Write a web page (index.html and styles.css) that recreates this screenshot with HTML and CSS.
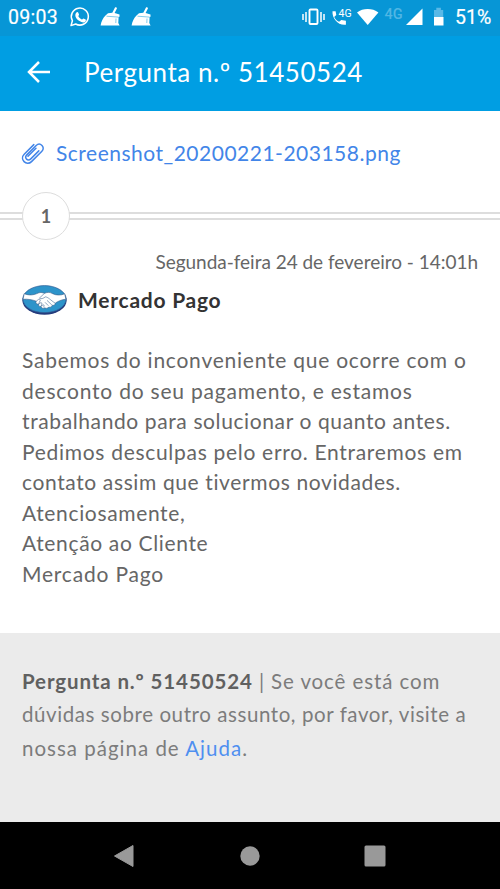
FILE: index.html
```html
<!DOCTYPE html>
<html lang="pt-BR">
<head>
<meta charset="utf-8">
<title>Pergunta n.º 51450524</title>
<link rel="stylesheet" href="styles.css">
</head>
<body>
<div class="status">
  <time class="clock">09:03</time>
  <svg class="notifications" width="92" height="36" viewBox="68 0 92 36">
    <path d="M71 25.600l1.400-4.900a8.500 8.500 0 1 1 3.300 3.300z" fill="none" stroke="#fff" stroke-width="1.500" stroke-linejoin="round"/>
    <path d="M76.500 12.400c.7-.6 1.400-.5 1.800.3l.7 1.700c.2.600-.8 1.400-.8 1.700.8 1.500 1.900 2.600 3.600 3.400.5.100 1.200-1.200 1.700-1.100l2.100 1.100c.6.300.3 1.400-.1 2-1.500 1.700-3.800 1-6-.4-2.200-1.400-4.400-4-4.200-6.200.1-1 .5-1.900 1.200-2.500z" fill="#fff"/>
    <g id="broom"><path d="M105.500 15.500l2.500-2.200 4.300-.6 2.700-5.200c.5-.8 2.300 0 1.900.9l-2.300 4.700 4.900 1.300v2.300l-.9.300-.3 6 1.300 2.500h-19c.7-4.200 2.300-7.300 4.900-10z" fill="#fff"/><path d="M106.500 16.200l12 .9M116 18.500l-.2 4.500" stroke="#0796d6" stroke-width=".5"/></g>
    <use href="#broom" x="31"/>
  </svg>
  <svg class="signals" width="150" height="36" viewBox="300 0 150 36">
    <rect x="309.500" y="9.500" width="8" height="14.500" rx="1" fill="none" stroke="#fff" stroke-width="1.900"/>
    <path d="M303 14v6M306 12v10M321 12v10M324 14v6" stroke="#fff" stroke-width="1.500"/>
    <path d="M332.500 11.200h3.100l.7 3.700-2.100 2.100c1.400 2.500 2.700 3.700 4.900 4.800l2.200-1.900 4.600.9v3.900c-7.600 1.200-14-6.300-13.400-13.500z" fill="#fff"/>
    <text x="338.500" y="17" class="call-network">4G</text>
    <path d="M357 12.400c6-4.500 15.400-4.500 21.400 0L367.700 25z" fill="#fff"/>
    <text x="384.500" y="18.500" class="data-network">4G</text>
    <path d="M406 25h16.500V8.500z" fill="#fff"/>
    <path d="M434 10h2.300V7.800h4.600V10h2.300v7.500H434z" fill="#5ab9e7"/><path d="M434 17h9.500v8.500H434z" fill="#fff"/>
  </svg>
  <span class="battery">51%</span>
</div>
<header class="bar">
  <svg width="24" height="24" viewBox="0 0 24 24"><path d="M12 2L2 12l10 10M2 12h21" fill="none" stroke="#fff" stroke-width="2.500"/></svg>
  <h1>Pergunta n.º 51450524</h1>
</header>
<main>
  <a class="attachment">
    <svg width="24" height="24" viewBox="0 0 24 24"><path d="M12.800 2.800L3.200 12.400c-5 5 2.300 12.400 7.300 7.400l10.400-10.400c3.900-3.900-1.800-9.600-5.700-5.700L5.800 13.100c-3 3 1 7 4 4l8-8M15 6.500l-8 8" transform="translate(0 .8)" fill="none" stroke="#4285e8" stroke-width="1.500" stroke-linecap="round"/></svg>
    <span>Screenshot_20200221-203158.png</span>
  </a>
  <div class="divider"><span class="step">1</span></div>
  <p class="date">Segunda-feira 24 de fevereiro - 14:01h</p>
  <div class="author">
    <svg width="46" height="32" viewBox="0 0 46 32">
      <ellipse cx="22.500" cy="16.500" rx="22.100" ry="14.300" fill="#243b7c"/>
      <ellipse cx="22.500" cy="15.100" rx="21.600" ry="13.500" fill="#2d94ca" stroke="#315f96" stroke-width=".7"/>
      <path d="M2.200 9.700c4.800 1.800 9.300 1.600 14-.7 2.700-1.100 4.800-.2 6.300.3 3.500-1.500 5.400-1.100 8.200.4 3.500 1.700 8.200 1.800 12 .1l1.200 5.400c-4.700.5-7.600 2-10.500 3.800-.1 2.100-1.700 2.600-3 2.200-.7 1.900-2.200 2.400-3.600 1.800-1 1.500-2.700 1.800-3.900.8-2 1.300-3.500.3-3.800-1.300-2.200.2-2.900-1-2.500-2.300-2.500.1-3.200-1.500-2.400-3-4-1.500-8.400-2.300-13.200-1.900z" fill="#fff" stroke="#315987" stroke-width=".6"/>
      <path d="M22.500 9.300l-5 4.700c1.300 1.500 4.100.3 5.800-1.100 2.500-.1 5.400 3.300 9.700 6.200M25 16.400l4.900 4.600M23 18.300l3.400 3.400M14.200 17.200l2.500-1.900c1.600-.3 2 .9 1.100 1.900l-1.200 3 2.400-1.700c1.300.3 1 1.700.1 3.600l2.100-1.300c1.300.2 1.100 1.300.1 2.600" fill="none" stroke="#315987" stroke-width=".55"/>
    </svg>
    <strong>Mercado Pago</strong>
  </div>
  <p class="message"><span class="m1">Sabemos do inconveniente que ocorre com o</span><span class="m2">desconto do seu pagamento, e estamos</span><span class="m3">trabalhando para solucionar o quanto antes.</span><span class="m4">Pedimos desculpas pelo erro. Entraremos em</span><span class="m5">contato assim que tivermos novidades.</span><span class="m6">Atenciosamente,</span><span class="m7">Atenção ao Cliente</span><span class="m8">Mercado Pago</span></p>
</main>
<footer class="help"><p><span class="h1"><strong>Pergunta n.º 51450524</strong> | Se você está com</span><span class="h2">dúvidas sobre outro assunto, por favor, visite a</span><span class="h3">nossa página de <a>Ajuda</a>.</span></p></footer>
<nav class="system">
  <svg width="22" height="24" viewBox="0 0 22 24"><path d="M1.500 12L20 1.500v21z" fill="#999" stroke="#999" stroke-linejoin="round"/></svg>
  <svg width="20" height="20" viewBox="0 0 20 20"><circle cx="10" cy="10" r="9.700" fill="#999"/></svg>
  <svg width="22" height="22" viewBox="0 0 22 22"><rect x=".5" y=".5" width="21" height="21" rx="1.500" fill="#999"/></svg>
</nav>
</body>
</html>
```
FILE: styles.css
```css
* { box-sizing: border-box; }
body { margin: 0; width: 500px; height: 889px; overflow: hidden; display: flex; flex-direction: column; background: #fff; color: #666; font-family: Lato, sans-serif; }
h1, p { margin: 0; font-weight: 400; }
svg { display: block; flex: none; }
.status { height: 36px; flex: none; display: flex; background: #0796d6; color: #fff; font: 400 19.5px/35px Roboto, sans-serif; -webkit-text-stroke: .2px; }
.clock { width: 68px; padding-left: 8px; letter-spacing: .3px; }
.signals { margin-left: 140px; }
.battery { padding-left: 5px; }
.call-network { font: 400 10.5px Roboto, sans-serif; fill: #fff; }
.data-network { font: 500 14.5px Roboto, sans-serif; fill: #50b6e4; }
.bar { height: 75px; flex: none; display: flex; align-items: center; padding: 0 27px 3px; gap: 33px; background: #009ee3; color: #fff; }
.bar h1 { font-size: 26px; line-height: 36px; letter-spacing: .55px; white-space: nowrap; }
main { height: 522px; flex: none; padding-top: 27px; white-space: nowrap; }
.attachment { display: flex; align-items: center; height: 30px; padding-left: 21px; gap: 11px; color: #4285e8; font-size: 21px; letter-spacing: .5px; }
.attachment span { padding-bottom: 2px; }
.divider { height: 48px; margin-top: 24px; padding-left: 22px; background: linear-gradient(#ddd, #ddd) 0 20px / 100% 2px no-repeat, linear-gradient(#ddd, #ddd) 0 26px / 100% 2px no-repeat; }
.step { display: flex; align-items: center; justify-content: center; width: 48px; height: 48px; border: 1.500px solid #ddd; border-radius: 50%; background: #fff; font-size: 18px; font-weight: 700; }
.date { height: 32px; margin-top: 6px; padding-right: 22px; line-height: 32px; font-size: 19px; letter-spacing: -.02px; text-align: right; }
.author { height: 32px; margin-top: 6px; display: flex; align-items: center; gap: 10px; padding-left: 22px; color: #333; font-size: 21px; letter-spacing: .75px; }
.author strong { padding-bottom: 2px; }
.message { padding: 29px 0 0 22px; font-size: 21px; line-height: 30.5px; }
.message span, .help p > span { display: block; }
.m1 { letter-spacing: .76px; }
.m2 { letter-spacing: .79px; }
.m3 { letter-spacing: .61px; }
.m4 { letter-spacing: .7px; }
.m5 { letter-spacing: .62px; }
.m6 { letter-spacing: .65px; }
.m7 { letter-spacing: .65px; }
.m8 { letter-spacing: .8px; }
.help { height: 189px; flex: none; padding: 32px 22px; background: #ebebeb; color: #7c7c7c; font-size: 20.5px; line-height: 33.3px; white-space: nowrap; }
.help strong { color: #606060; letter-spacing: .88px; }
.h1 { letter-spacing: .9px; }
.h2 { letter-spacing: .58px; }
.h3 { letter-spacing: 1px; }
.help a { color: #4f8ff0; }
.system { height: 67px; flex: none; display: flex; align-items: center; justify-content: space-between; padding: 0 114px 0 113px; background: #000; }
```
